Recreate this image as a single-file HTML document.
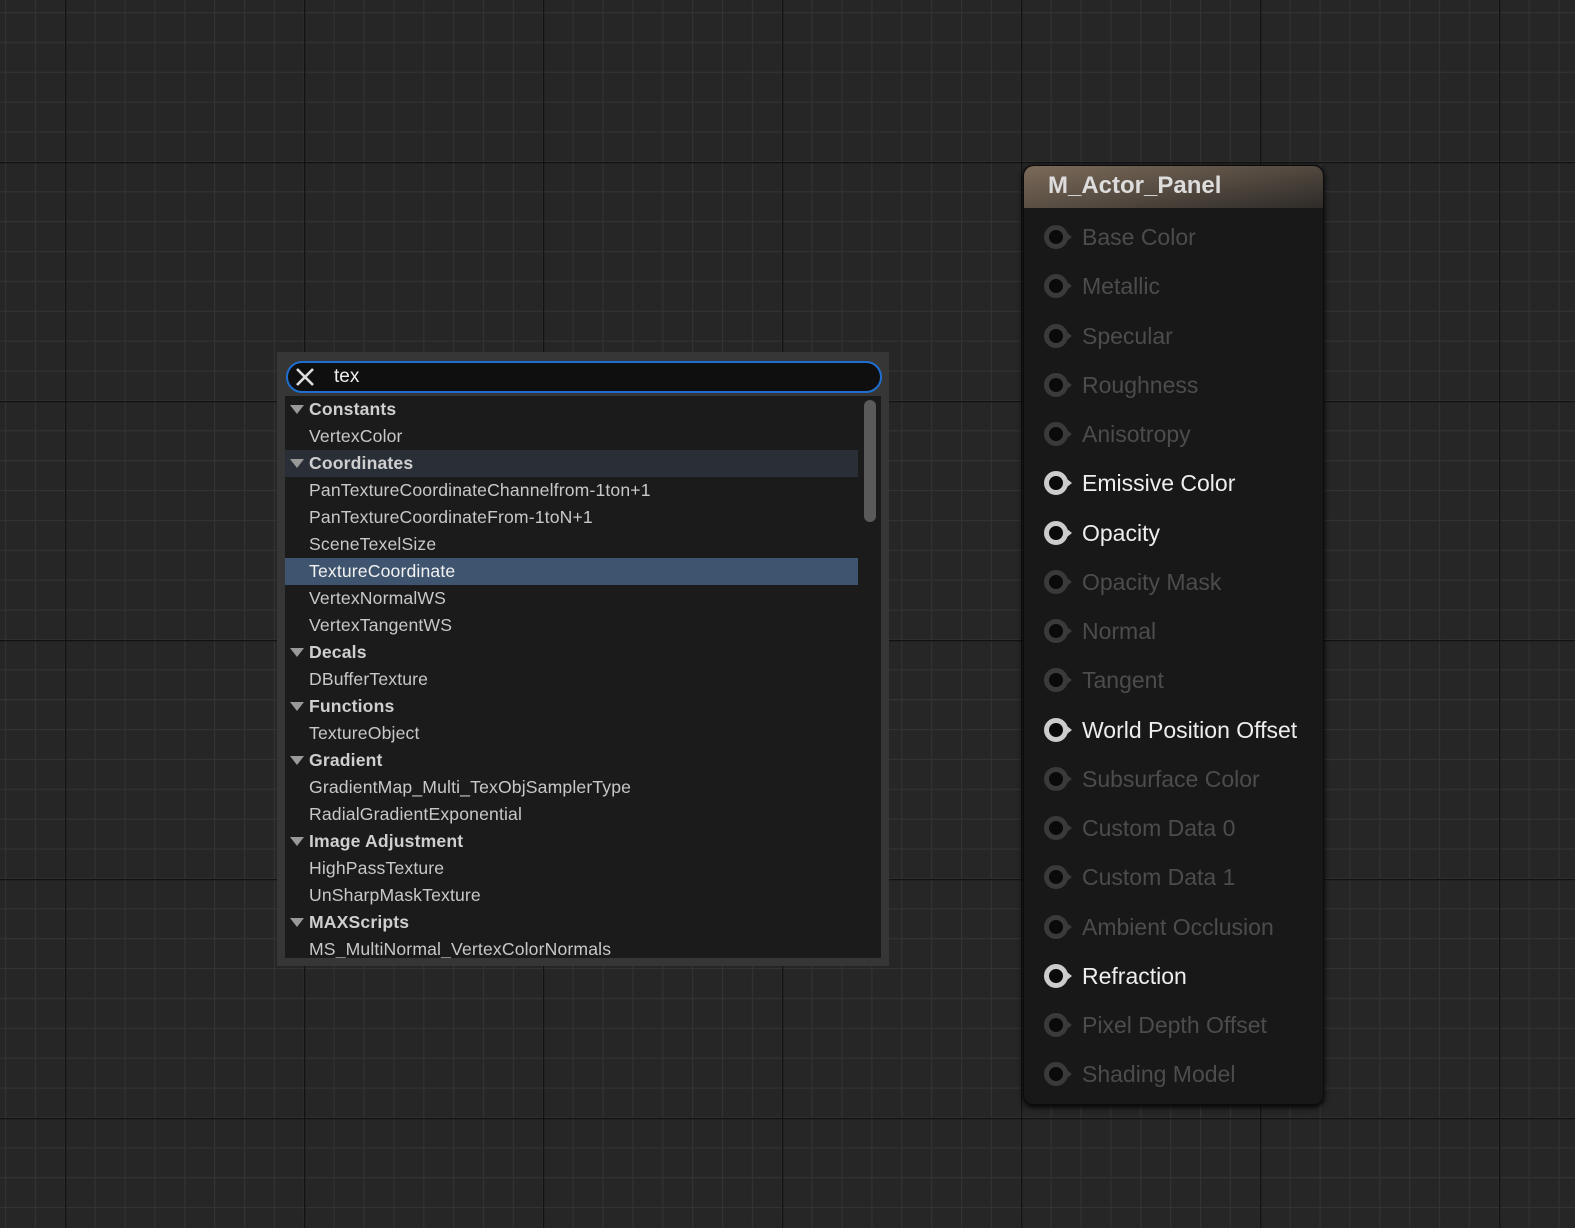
<!DOCTYPE html><html><head><style>
*{margin:0;padding:0;box-sizing:border-box}
body{width:1575px;height:1228px;overflow:hidden;background:#262626;font-family:"Liberation Sans",sans-serif;position:relative}
#pop{position:absolute;left:277px;top:352px;width:612px;height:614px;background:#363636}
#search{position:absolute;left:286px;top:361px;width:596px;height:32px;background:#0f0f0f;border:2px solid #1f6fd0;border-radius:16px}
#search span{position:absolute;left:46px;top:3px;color:#eee;font-size:19px}
#list{position:absolute;left:285px;top:396px;width:596px;height:562px;background:#1b1b1b;overflow:hidden}
.r{position:absolute;left:0;width:573px;height:27px;line-height:27px;color:#c8c8c8;font-size:17.6px;letter-spacing:0.15px;padding-left:24px;white-space:nowrap}
.h{font-weight:bold;color:#cfcfcf}
.h:before{content:"";position:absolute;left:5px;top:9px;border-left:7px solid transparent;border-right:7px solid transparent;border-top:9px solid #999}
#sb{position:absolute;left:864px;top:400px;width:12px;height:122px;background:#5a5a5a;border-radius:6px}
#node{position:absolute;left:1023px;top:165px;width:301px;height:940px;background:#171817;border-radius:10px;box-shadow:0 2px 6px #000;border:1px solid #0c0c0c}
#hd{height:42px;border-radius:10px 10px 0 0;background:linear-gradient(170deg,#7b6a58 0%,#5a4f44 45%,#2e2b28 100%);color:#ddd;font-weight:bold;font-size:24px;padding:6px 0 0 24px}
.p{position:absolute;left:20px;height:30px;font-size:23px;color:#4c4c4c;padding-left:38px;line-height:30px;white-space:nowrap}
.p i{position:absolute;left:0px;top:3px;width:24px;height:24px;border-radius:50%;border:5px solid #3a3a3a;background:#0a0a0a}
.p b{position:absolute;left:23px;top:11px;border-top:4px solid transparent;border-bottom:4px solid transparent;border-left:5px solid #3a3a3a}
.p.on{color:#eee}.p.on i{border-color:#ccc}.p.on b{border-left-color:#ccc}
</style></head><body>
<svg width="1575" height="1228" style="position:absolute;left:0;top:0">
<defs><pattern id="g" x="5" y="12" width="29.875" height="29.875" patternUnits="userSpaceOnUse"><path d="M0.5 0V30M0 0.5H30" stroke="#333" stroke-width="1.2"/></pattern>
<pattern id="G" x="65" y="162" width="239" height="239" patternUnits="userSpaceOnUse"><path d="M0.5 0V239M0 0.5H239" stroke="#121212" stroke-width="1.5"/></pattern></defs>
<rect width="1575" height="1228" fill="url(#g)"/><rect width="1575" height="1228" fill="url(#G)"/></svg>
<div id="pop"></div>
<div id="search"><svg width="24" height="24" style="position:absolute;left:6px;top:3px"><path d="M3 3L19 19M19 3L3 19" stroke="#ddd" stroke-width="2.6"/></svg><span>tex</span></div>
<div id="list">
<div class="r h" style="top:0">Constants</div>
<div class="r" style="top:27px">VertexColor</div>
<div class="r h" style="top:54px;background:#2a2f37">Coordinates</div>
<div class="r" style="top:81px">PanTextureCoordinateChannelfrom-1ton+1</div>
<div class="r" style="top:108px">PanTextureCoordinateFrom-1toN+1</div>
<div class="r" style="top:135px">SceneTexelSize</div>
<div class="r" style="top:162px;background:#3f546e;color:#f2f2f2">TextureCoordinate</div>
<div class="r" style="top:189px">VertexNormalWS</div>
<div class="r" style="top:216px">VertexTangentWS</div>
<div class="r h" style="top:243px">Decals</div>
<div class="r" style="top:270px">DBufferTexture</div>
<div class="r h" style="top:297px">Functions</div>
<div class="r" style="top:324px">TextureObject</div>
<div class="r h" style="top:351px">Gradient</div>
<div class="r" style="top:378px">GradientMap_Multi_TexObjSamplerType</div>
<div class="r" style="top:405px">RadialGradientExponential</div>
<div class="r h" style="top:432px">Image Adjustment</div>
<div class="r" style="top:459px">HighPassTexture</div>
<div class="r" style="top:486px">UnSharpMaskTexture</div>
<div class="r h" style="top:513px">MAXScripts</div>
<div class="r" style="top:540px">MS_MultiNormal_VertexColorNormals</div>
</div>
<div id="sb"></div>
<div id="node"><div id="hd">M_Actor_Panel</div>
<div class="p" style="top:56px"><i></i><b></b>Base Color</div>
<div class="p" style="top:105px"><i></i><b></b>Metallic</div>
<div class="p" style="top:155px"><i></i><b></b>Specular</div>
<div class="p" style="top:204px"><i></i><b></b>Roughness</div>
<div class="p" style="top:253px"><i></i><b></b>Anisotropy</div>
<div class="p on" style="top:302px"><i></i><b></b>Emissive Color</div>
<div class="p on" style="top:352px"><i></i><b></b>Opacity</div>
<div class="p" style="top:401px"><i></i><b></b>Opacity Mask</div>
<div class="p" style="top:450px"><i></i><b></b>Normal</div>
<div class="p" style="top:499px"><i></i><b></b>Tangent</div>
<div class="p on" style="top:549px"><i></i><b></b>World Position Offset</div>
<div class="p" style="top:598px"><i></i><b></b>Subsurface Color</div>
<div class="p" style="top:647px"><i></i><b></b>Custom Data 0</div>
<div class="p" style="top:696px"><i></i><b></b>Custom Data 1</div>
<div class="p" style="top:746px"><i></i><b></b>Ambient Occlusion</div>
<div class="p on" style="top:795px"><i></i><b></b>Refraction</div>
<div class="p" style="top:844px"><i></i><b></b>Pixel Depth Offset</div>
<div class="p" style="top:893px"><i></i><b></b>Shading Model</div>
</div>
</body></html>
